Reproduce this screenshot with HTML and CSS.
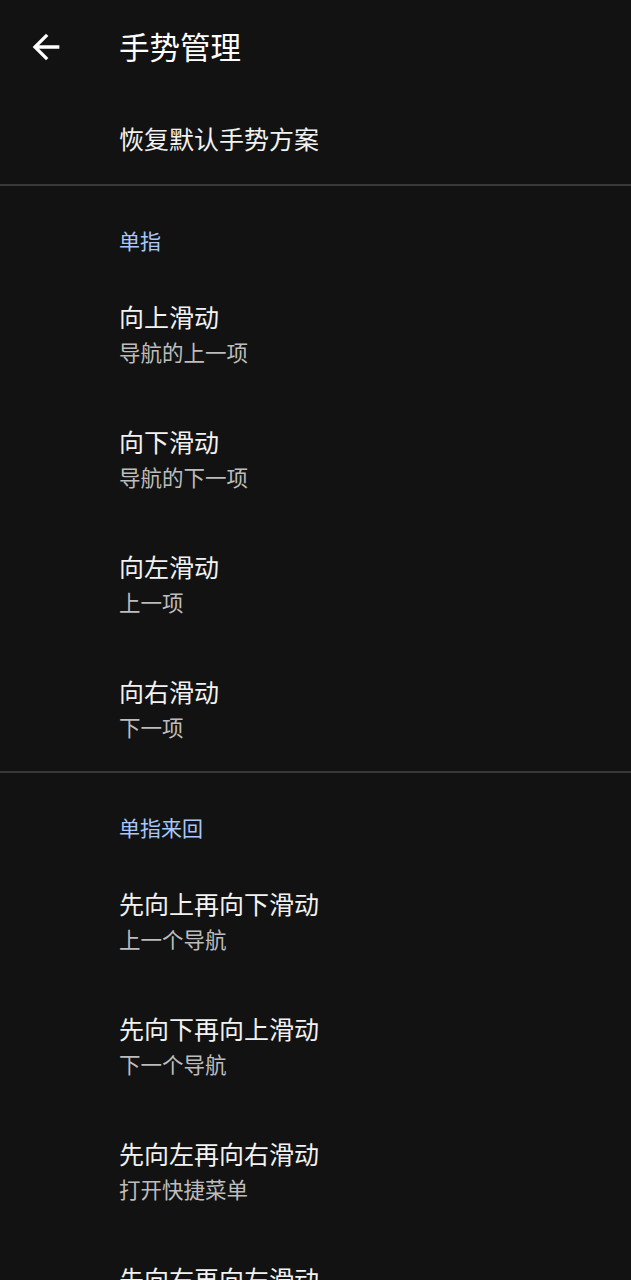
FILE: index.html
```html
<!DOCTYPE html>
<html lang="zh-CN">
<head>
    <meta charset="UTF-8">
    <meta name="viewport" content="width=device-width, initial-scale=1.0">
    <title>手势管理</title>
    <link rel="stylesheet" href="styles.css">
</head>
<body>
    <!-- 顶部栏 -->
    <div class="toolbar">
        <svg class="back-icon" viewBox="0 0 24 24" width="40" height="40">
            <path d="M20 11H7.83l5.59-5.59L12 4l-8 8 8 8 1.41-1.41L7.83 13H20v-2z" fill="#ffffff"/>
        </svg>
        <div class="toolbar-title">手势管理</div>
    </div>

    <div class="reset-row">恢复默认手势方案</div>
    <div class="divider"></div>

    <!-- 单指 -->
    <div class="category">单指</div>
    <div class="pref">
        <div class="pref-title">向上滑动</div>
        <div class="pref-summary">导航的上一项</div>
    </div>
    <div class="pref">
        <div class="pref-title">向下滑动</div>
        <div class="pref-summary">导航的下一项</div>
    </div>
    <div class="pref">
        <div class="pref-title">向左滑动</div>
        <div class="pref-summary">上一项</div>
    </div>
    <div class="pref">
        <div class="pref-title">向右滑动</div>
        <div class="pref-summary">下一项</div>
    </div>
    <div class="divider"></div>

    <!-- 单指来回 -->
    <div class="category">单指来回</div>
    <div class="pref">
        <div class="pref-title">先向上再向下滑动</div>
        <div class="pref-summary">上一个导航</div>
    </div>
    <div class="pref">
        <div class="pref-title">先向下再向上滑动</div>
        <div class="pref-summary">下一个导航</div>
    </div>
    <div class="pref">
        <div class="pref-title">先向左再向右滑动</div>
        <div class="pref-summary">打开快捷菜单</div>
    </div>
    <div class="pref">
        <div class="pref-title">先向右再向左滑动</div>
    </div>
</body>
</html>
```

FILE: styles.css
```css
body {
    margin: 0;
    padding: 0;
    background-color: #121212;
    color: #f2f2f2;
    font-family: "Noto Sans CJK SC", "Noto Sans", sans-serif;
    overflow: hidden;
}

/* 顶部栏 */
.toolbar {
    height: 96px;
    display: flex;
    align-items: center;
    padding-left: 26px;
}

.back-icon {
    display: block;
    margin-bottom: 2px;
}

.toolbar-title {
    margin-left: 53px;
    margin-bottom: 4px;
    font-size: 30.5px;
    line-height: 40px;
    color: #ffffff;
}

.reset-row {
    height: 84px;
    padding: 0 0 4px 119px;
    display: flex;
    align-items: center;
    font-size: 25px;
}

.divider {
    height: 2px;
    background-color: #383838;
}

/* 分类标题 */
.category {
    padding: 38px 0 15px 119px;
    font-size: 21px;
    line-height: 32px;
    color: #a8c7fa;
}

/* 列表项 */
.pref {
    padding: 27px 0 26px 119px;
}

.pref-title {
    font-size: 25px;
    line-height: 36px;
}

.pref-summary {
    font-size: 21.5px;
    line-height: 36px;
    color: #bdbdbd;
}
```
